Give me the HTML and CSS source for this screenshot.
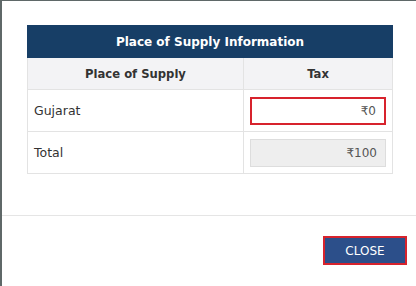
FILE: index.html
```html
<!DOCTYPE html>
<html lang="en">
<head>
  <meta charset="UTF-8" />
  <title>Place of Supply Information</title>
  <link rel="stylesheet" href="styles.css">
</head>
<body>
  <div class="modal">
    <div class="modal-body">
      <table class="pos-table">
        <tr><th class="title" colspan="2">Place of Supply Information</th></tr>
        <tr class="head"><th>Place of Supply</th><th class="tax-col">Tax</th></tr>
        <tr>
          <td>Gujarat</td>
          <td class="tax-col"><input class="amount highlight" type="text" value="₹0" /></td>
        </tr>
        <tr>
          <td>Total</td>
          <td class="tax-col"><input class="amount" type="text" value="₹100" disabled /></td>
        </tr>
      </table>
    </div>
    <div class="modal-footer">
      <button class="btn-close">CLOSE</button>
    </div>
  </div>
</body>
</html>
```

FILE: styles.css
```css
body { margin: 0; background: #5f6868; font-family: "DejaVu Sans", Verdana, sans-serif; overflow: hidden; }
.modal { margin: 1px 0 0 2px; background: #fff; height: 285px; }
.modal-body { padding: 24px 23px 41px 25px; border-bottom: 1px solid #e5e5e5; }
.pos-table { width: 100%; border-collapse: collapse; font-size: 12.5px; color: #333; }
.pos-table th, .pos-table td { border: 1px solid #e3e3e3; }
.pos-table .title { background: #173e66; color: #fff; height: 31px; padding: 0; font-size: 12px; border-color: #173e66; }
.head th { background: #f3f3f5; height: 31px; padding: 0; font-size: 11.6px; color: #333; }
.pos-table td { height: 41px; padding: 0 6px; }
.tax-col { width: 136px; }
.amount { box-sizing: border-box; width: 136px; height: 28px; border: 1px solid #ddd; text-align: right; padding: 0 8px; font: inherit; font-size: 12px; color: #555; background: #fff; display: block; }
.amount:disabled { background: #eee; color: #555; }
.highlight { border: 2px solid #d7232d; }
.modal-footer { display: flex; justify-content: flex-end; padding: 20px 9px 0 0; }
.btn-close { width: 84px; height: 29px; background: #2c4f8a; color: #fff; border: 2px solid #d7232d; font-family: "DejaVu Sans", Verdana, sans-serif; font-size: 12px; padding: 0; }
```
